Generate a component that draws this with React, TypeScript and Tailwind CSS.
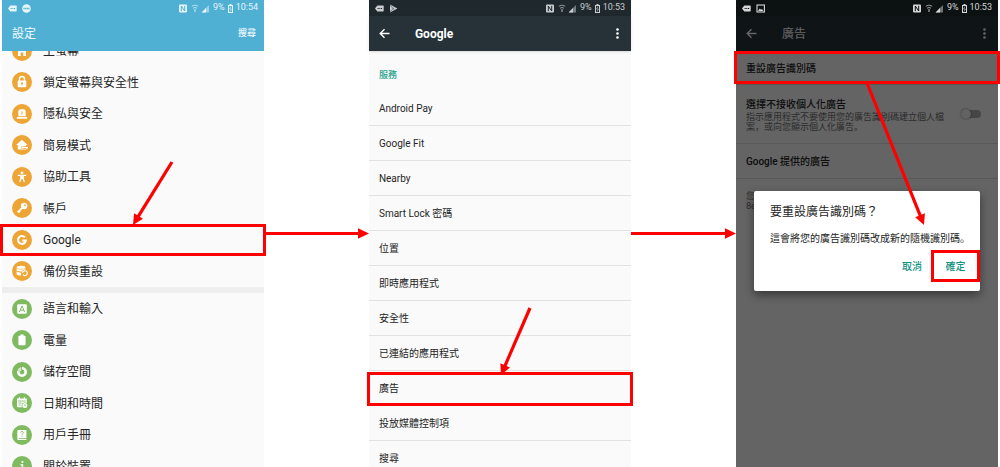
import React from "react";
import clsx from "clsx";

type Row = { label: string; icon: React.ReactNode; marked?: boolean };

const PERSONAL: Row[] = [
  {
    label: "主螢幕",
    icon: <path d="M10 4.5 4.5 10H6v5h2.7v-3.5h2.6V15H14v-5h1.5z" fill="#fff" />,
  },
  {
    label: "鎖定螢幕與安全性",
    icon: (
      <>
        <path d="M7.5 9V7a2.5 2.5 0 0 1 5 0v2" fill="none" stroke="#fff" strokeWidth="1.4" />
        <rect x="5.7" y="8.6" width="8.6" height="6.6" rx="0.8" fill="#fff" />
        <circle cx="10" cy="11.2" r="1" fill="#eda535" />
        <path d="M10 11v2.6" stroke="#eda535" strokeWidth="0.9" />
      </>
    ),
  },
  {
    label: "隱私與安全",
    icon: (
      <>
        <path d="M6.3 12.2V7.6Q6.3 5.2 8.7 5.2h2.6q2.4 0 2.4 2.4v4.6z" fill="#fff" />
        <rect x="4.8" y="13" width="10.4" height="1.8" rx="0.5" fill="#fff" />
        <path d="M10 7.6v2.8" stroke="#eda535" strokeWidth="1.1" />
      </>
    ),
  },
  {
    label: "簡易模式",
    icon: (
      <>
        <path d="M9.8 4.8 4.2 10h1.6v4.6h8.4V10h1.4z" fill="#fff" />
        <path d="M10.4 12.6H15" stroke="#eda535" strokeWidth="2.8" strokeLinecap="round" />
        <circle cx="10.5" cy="12.6" r="1.1" fill="#fff" />
        <path d="M11 12.6h5M14.8 12.6v1.4" stroke="#fff" strokeWidth="1.1" />
      </>
    ),
  },
  {
    label: "協助工具",
    icon: (
      <>
        <circle cx="10" cy="5.8" r="1.4" fill="#fff" />
        <path d="M5.8 8.4h8.4M9 8.4v3L7.7 15M11 8.4v3l1.3 3.6" fill="none" stroke="#fff" strokeWidth="1.3" />
        <path d="M8.4 8h3.2v4H8.4z" fill="#fff" />
      </>
    ),
  },
  {
    label: "帳戶",
    icon: (
      <>
        <circle cx="12.1" cy="8" r="3.2" fill="#fff" />
        <circle cx="13" cy="7.1" r="0.9" fill="#eda535" />
        <path d="m10.4 9.6-4.8 4.8M6.4 12.4l1.8 1.8" stroke="#fff" strokeWidth="1.8" />
      </>
    ),
  },
  {
    label: "Google",
    marked: true,
    icon: <path d="M12.9 7.4A3.9 3.9 0 1 0 13.8 10.5H10.2" fill="none" stroke="#fff" strokeWidth="2.1" />,
  },
  {
    label: "備份與重設",
    icon: (
      <>
        <ellipse cx="9" cy="6.2" rx="4.4" ry="1.5" fill="#fff" />
        <path d="M4.6 7.6q4.4 2 8.8 0v1.8q-4.4 2-8.8 0zM4.6 10.6q3 1.3 4.6 1v2.9q-3 .2-4.6-1z" fill="#fff" />
        <circle cx="12.8" cy="12.2" r="3.5" fill="#eda535" />
        <path d="M10.8 11a2.4 2.4 0 1 1 .2 2.7" fill="none" stroke="#fff" strokeWidth="1.1" />
        <path d="M9.6 10.2 12 10.6l-1.8 1.8z" fill="#fff" />
      </>
    ),
  },
];

const SYSTEM: Row[] = [
  {
    label: "語言和輸入",
    icon: (
      <>
        <rect x="5.2" y="5.2" width="9.6" height="9.6" rx="1" fill="#fff" />
        <path d="M7.4 13 10 7l2.6 6M8.3 11.2h3.4" fill="none" stroke="#7fba60" strokeWidth="1" />
      </>
    ),
  },
  {
    label: "電量",
    icon: <path d="M8.4 4.6h3.2v1.2h1.2q.8 0 .8.8v7.8q0 .8-.8.8H7.2q-.8 0-.8-.8V6.6q0-.8.8-.8h1.2z" fill="#fff" />,
  },
  {
    label: "儲存空間",
    icon: (
      <>
        <circle cx="10" cy="10" r="3.7" fill="none" stroke="#fff" strokeWidth="2.6" />
        <path d="M10 10V3.6A6.4 6.4 0 0 0 4 8.6z" fill="#7fba60" />
        <path d="M9.2 9.2V5A5 5 0 0 0 5.4 8.4z" fill="#fff" opacity="0.7" />
      </>
    ),
  },
  {
    label: "日期和時間",
    icon: (
      <>
        <path d="M5 5.4h9.8v8.8H6q-1 0-1-1z" fill="#fff" />
        <path d="M7.4 4.3v1.8M12.4 4.3v1.8" stroke="#fff" strokeWidth="1.3" />
        <path d="M6 8h7.8" stroke="#7fba60" strokeWidth="0.8" />
        <path d="M6.6 10h3M6.6 12h2" stroke="#7fba60" strokeWidth="0.9" />
        <circle cx="12.8" cy="12.6" r="3.2" fill="#7fba60" />
        <circle cx="12.8" cy="12.6" r="2.5" fill="#fff" />
        <path d="M12.8 11.2v1.6h1.3" fill="none" stroke="#7fba60" strokeWidth="0.7" />
      </>
    ),
  },
  {
    label: "用戶手冊",
    icon: (
      <>
        <path d="M6.4 5h8v8.2H6.6v.9h7.8v.9H6.4q-1.1 0-1.1-1.1V6.1Q5.3 5 6.4 5z" fill="#fff" />
        <path d="M8.6 7.6q.1-1.1 1.4-1.1t1.4 1.1q0 .7-.8 1.1-.6.3-.6 1.1M10 10.8v1" fill="none" stroke="#7fba60" strokeWidth="0.9" />
      </>
    ),
  },
  {
    label: "關於裝置",
    icon: (
      <>
        <circle cx="10.4" cy="6" r="1.1" fill="#fff" />
        <path d="M8.6 8.8h1.9v5.4M8.4 14.3h3.8" fill="none" stroke="#fff" strokeWidth="1.4" />
      </>
    ),
  },
];

const SERVICES = [
  "Android Pay",
  "Google Fit",
  "Nearby",
  "Smart Lock 密碼",
  "位置",
  "即時應用程式",
  "安全性",
  "已連結的應用程式",
  "廣告",
  "投放媒體控制項",
  "搜尋",
];

const FRAME = "pointer-events-none absolute border-[3px] border-[#ff0000]";

function Pointer({ dx, dy, className }: { dx: number; dy: number; className: string }) {
  const w = Math.abs(dx);
  const len = Math.hypot(dx, dy);
  const startX = dx < 0 ? w : 0;
  const angle = (Math.atan2(dy, dx) * 180) / Math.PI;
  return (
    <svg
      className={clsx("pointer-events-none absolute z-30 overflow-visible", className)}
      width={w}
      height={dy}
      aria-hidden="true"
    >
      <g transform={`translate(${startX} 0) rotate(${angle})`} fill="#ff0000">
        <rect x="0" y="-1.6" width={len - 8} height="3.2" />
        <path d={`M${len} 0l-10.5-5.2v10.4z`} />
      </g>
    </svg>
  );
}

function NextStep() {
  return (
    <div className="flex items-center self-start pt-[228px]" aria-hidden="true">
      <div className="h-[3px] flex-1 bg-[#ff0000]" />
      <svg className="h-[11px] w-[11px]" viewBox="0 0 11 11">
        <path d="M0 0.3 11 5.5 0 10.7z" fill="#ff0000" />
      </svg>
    </div>
  );
}

function StatusBar({
  time,
  badge,
  className,
  ink,
}: {
  time: string;
  badge: React.ReactNode;
  className: string;
  ink: string;
}) {
  return (
    <div className={clsx("flex h-4 items-center justify-between px-[6px] text-[9px]", className)}>
      <div className="flex items-center gap-[5px]">
        <svg className="h-[9px] w-[9px]" viewBox="0 0 9 9" aria-hidden="true">
          <path d="M0 4.5 2.3 1.6H8q.7 0 .7.7v4.4q0 .7-.7.7H2.3z" fill="currentColor" />
          <path d="M2.6 4.5h4.8" stroke={ink} strokeWidth="1" strokeDasharray="1.1 0.6" />
        </svg>
        <svg className="h-[9px] w-[9px]" viewBox="0 0 9 9" aria-hidden="true">
          {badge}
        </svg>
      </div>
      <div className="flex items-center gap-[3px]">
        <svg className="h-[9px] w-[31px]" viewBox="0 0 31 9" aria-hidden="true">
          <rect x="0" y="0.5" width="8" height="8" rx="1" fill="currentColor" />
          <path d="M2.3 7.2V2l3.4 5V1.8" fill="none" stroke={ink} strokeWidth="1" />
          <g fill="none" stroke="currentColor" opacity="0.7">
            <path d="M12.8 2.2q3.2-2.2 6.4 0M14 4.2q2-1.4 4 0" strokeWidth="1" />
            <path d="M16 5v3" strokeWidth="1.3" />
          </g>
          <path d="M22.6 8.4 30 1v7.4z" fill="currentColor" opacity="0.5" />
          <path d="M22.6 8.4 27 4v4.4z" fill="currentColor" />
        </svg>
        <span>9%</span>
        <svg className="h-[9px] w-[5px]" viewBox="0 0 5 9" aria-hidden="true">
          <path d="M1.5 0h2v1H5v8H0V1h1.5z" fill="currentColor" />
          <path d="M1 2h3v6H1z" fill={ink} />
          <path d="M3 2.4 1.6 5h1.8L2 7.6" fill="none" stroke="currentColor" strokeWidth="0.6" />
        </svg>
        <span>{time}</span>
      </div>
    </div>
  );
}

function BackIcon() {
  return (
    <svg className="h-[11px] w-[11px]" viewBox="0 0 11 11" aria-hidden="true">
      <path d="M10.5 5.5H1.5M5.5 1.2 1.2 5.5l4.3 4.3" fill="none" stroke="currentColor" strokeWidth="1.4" />
    </svg>
  );
}

function MoreIcon() {
  return (
    <svg className="h-[11px] w-[3px]" viewBox="0 0 3 11" aria-hidden="true">
      <circle cx="1.5" cy="1.5" r="1.3" fill="currentColor" />
      <circle cx="1.5" cy="5.5" r="1.3" fill="currentColor" />
      <circle cx="1.5" cy="9.5" r="1.3" fill="currentColor" />
    </svg>
  );
}

function AppBar({ title, className }: { title: string; className: string }) {
  return (
    <header className={clsx("flex h-[35px] items-center pr-3 pl-[10px]", className)}>
      <button type="button" aria-label="返回">
        <BackIcon />
      </button>
      <h2 className="ml-[25px] flex-1 text-[12px] leading-4">{title}</h2>
      <button type="button" aria-label="更多選項">
        <MoreIcon />
      </button>
    </header>
  );
}

function SettingRow({ row, color }: { row: Row; color: string }) {
  return (
    <li className="relative flex">
      <button type="button" className="flex flex-1 items-center gap-[11px] pl-[10px] text-left text-[12px] leading-4">
        <svg className="h-5 w-5" viewBox="0 0 20 20" aria-hidden="true">
          <circle cx="10" cy="10" r="10" fill={color} />
          {row.icon}
        </svg>
        <span className="pt-[1px]">{row.label}</span>
      </button>
      {row.marked && <span className={clsx(FRAME, "-inset-x-[2px] inset-y-0")} />}
    </li>
  );
}

function SettingsScreen() {
  return (
    <section className="relative bg-[#fafafa] text-[#252525]">
      <div className="relative z-10 bg-[#4fb0d4] text-[#f1fafd]">
        <StatusBar
          time="10:54"
          className="text-[#e6f5fa]"
          ink="#4fb0d4"
          badge={
            <>
              <circle cx="4.5" cy="4.5" r="4.3" fill="currentColor" />
              <path d="M1.5 4.5h6" stroke="#4fb0d4" strokeWidth="1.3" strokeDasharray="1.2 0.4" />
            </>
          }
        />
        <header className="flex h-[35px] items-center justify-between pr-2 pl-[10px]">
          <h2 className="text-[12px] leading-4">設定</h2>
          <button type="button" className="text-[9px] font-medium">
            搜尋
          </button>
        </header>
      </div>
      <ul className="-mt-4 grid h-[252px] grid-rows-8">
        {PERSONAL.map((row) => (
          <SettingRow key={row.label} row={row} color="#eda535" />
        ))}
      </ul>
      <div className="h-[6px] bg-[#eeeeee]" />
      <ul className="grid h-[189px] grid-rows-6">
        {SYSTEM.map((row) => (
          <SettingRow key={row.label} row={row} color="#7fba60" />
        ))}
      </ul>
      <Pointer dx={-39} dy={63} className="top-[162px] left-[131px]" />
    </section>
  );
}

function GoogleScreen() {
  return (
    <section className="relative bg-[#fafafa] text-[#252525]">
      <StatusBar
        time="10:53"
        className="bg-[#1f282c] text-[#c9cdcf]"
        ink="#1f282c"
        badge={
          <>
            <path d="M1 0.6v7.8l7.4-3.9z" fill="currentColor" />
            <path d="m1 1 4 4.6M1 8l4-4.4" stroke="#1f282c" strokeWidth="0.5" />
          </>
        }
      />
      <AppBar title="Google" className="bg-[#263238] font-bold text-white shadow-sm" />
      <h3 className="px-[10px] pt-[17px] pb-[9px] text-[9px] leading-[14px] font-medium text-[#26a08c]">服務</h3>
      <ul className="text-[10px]">
        {SERVICES.map((name) => (
          <li key={name} className="relative flex h-[35px] border-b border-[#e2e2e2]">
            <button type="button" className="flex-1 px-[10px] pt-[1px] text-left">
              {name}
            </button>
            {name === "廣告" && <span className={clsx(FRAME, "-inset-x-[2px] top-[1px] -bottom-[1px]")} />}
          </li>
        ))}
      </ul>
      <Pointer dx={-29} dy={67} className="top-[308px] left-[132px]" />
    </section>
  );
}

function AdsScreen() {
  return (
    <section className="relative flex flex-col bg-[#fafafa] text-[#252525]">
      <StatusBar
        time="10:53"
        className="bg-[#0c1112] text-[#d5d7d8]"
        ink="#0c1112"
        badge={
          <>
            <rect x="1" y="1" width="7.4" height="7" fill="none" stroke="currentColor" strokeWidth="1.1" />
            <path d="m2 7 1.8-2.6 1.2 1.3 1-.8L7.4 7z" fill="currentColor" />
          </>
        }
      />
      <div className="relative flex-1">
        <AppBar title="廣告" className="bg-[#263238] text-white" />
        <button
          type="button"
          className="block h-[34px] w-full border-b border-[#dddddd] px-[10px] pt-[2px] text-left text-[10px] font-medium"
        >
          重設廣告識別碼
        </button>
        <div className="flex h-[59px] items-center gap-4 border-b border-[#dddddd] pr-[17px] pl-[10px]">
          <label htmlFor="opt-out" className="flex-1 pt-[1px] text-[10px] leading-[14px] font-medium">
            選擇不接收個人化廣告
            <span className="block font-[Roboto,'Noto_Sans_CJK_JP',sans-serif] text-[9px] leading-[10px] font-normal whitespace-nowrap text-[#6e6e6e]">
              指示應用程式不要使用您的廣告識別碼建立個人檔
              <br />
              案，或向您顯示個人化廣告。
            </span>
          </label>
          <input
            id="opt-out"
            type="checkbox"
            role="switch"
            className="relative h-2 w-[18px] appearance-none rounded-full bg-[#b0b0b0] before:absolute before:-top-[1px] before:-left-[2px] before:h-[10px] before:w-[10px] before:rounded-full before:bg-[#f6f6f6] before:shadow-[0_0_2px_rgba(0,0,0,0.6)]"
          />
        </div>
        <button
          type="button"
          className="block h-[35px] w-full border-b border-[#dddddd] px-[10px] pt-[1px] text-left text-[10px] font-medium"
        >
          Google 提供的廣告
        </button>
        <p className="px-[10px] pt-3 text-[9px] leading-[10px] text-[#6e6e6e]">
          您
          <br />
          8e
        </p>
        <div className="absolute inset-0 bg-black/60" />
        <div
          role="dialog"
          aria-labelledby="reset-title"
          className="absolute inset-x-[18px] top-[175px] z-20 rounded-[2px] bg-white pt-[13px] shadow-[0_4px_10px_rgba(0,0,0,0.45)]"
        >
          <h3 id="reset-title" className="px-4 text-[12px] leading-4">
            要重設廣告識別碼？
          </h3>
          <p className="px-4 pt-3 font-[Roboto,'Noto_Sans_CJK_JP',sans-serif] text-[10px] leading-[14px] whitespace-nowrap">
            這會將您的廣告識別碼改成新的隨機識別碼。
          </p>
          <div className="flex justify-end pt-1 pb-[9px] text-[10px] font-medium text-[#129482]">
            <button type="button" className="px-[9px]">
              取消
            </button>
            <button type="button" className="h-8 w-[49px] border-[3px] border-[#ff0000]">
              確定
            </button>
          </div>
        </div>
        <span className={clsx(FRAME, "-inset-x-[2px] top-[35px] z-10 h-[33px]")} />
      </div>
      <Pointer dx={57} dy={142} className="top-[83px] left-[131px]" />
    </section>
  );
}

export default function App() {
  return (
    <main className="grid h-screen grid-cols-[5fr_2fr_5fr_2fr_5fr] overflow-hidden bg-white px-[2px] font-[Roboto,'Noto_Sans_CJK_TC',sans-serif]">
      <SettingsScreen />
      <NextStep />
      <GoogleScreen />
      <NextStep />
      <AdsScreen />
    </main>
  );
}
